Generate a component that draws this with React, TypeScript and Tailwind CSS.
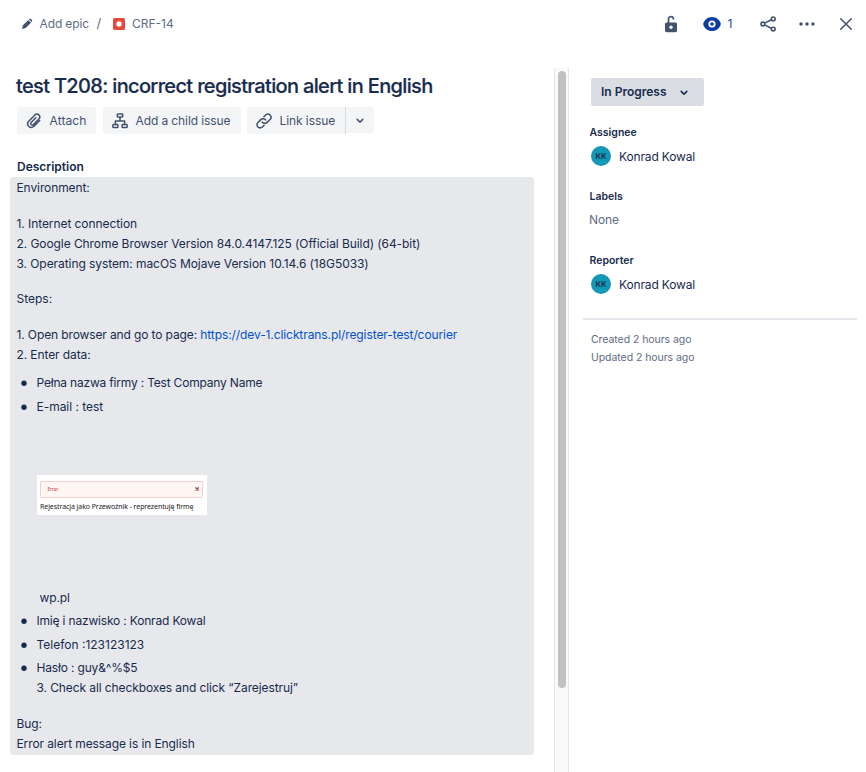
import type { ReactNode } from "react";

function Chevron({ className }: { className: string }) {
  return (
    <svg viewBox="0 0 8 6" className={className} fill="none" stroke="currentColor" strokeWidth="1.6" strokeLinecap="round" strokeLinejoin="round">
      <path d="M1.2 1.4 4 4.2 6.8 1.4" />
    </svg>
  );
}

function Header() {
  return (
    <header className="flex h-12 items-center pl-[21px] pr-[13px] text-[12px] text-[#5e6c84]">
      <svg viewBox="0 0 12 12" className="h-3 w-3 text-[#42526e]" fill="currentColor">
        <path d="M7.3 1.9 10.1 4.7 4.6 9.9 1 11 2 7.200Z M8 1.3 8.600.800Q9.300.2 10 .9L11 1.900Q11.600 2.600 11 3.300L10.500 4Z" />
      </svg>
      <span className="ml-[6.500px] w-[50px] whitespace-nowrap tracking-[-0.12px]">Add epic</span>
      <span className="ml-[7px] w-[6px] text-[13px]">/</span>
      <svg viewBox="0 0 12 12" className="ml-[10.500px] h-3 w-3">
        <rect width="12" height="12" rx="1.5" fill="#e5493a" />
        <circle cx="6" cy="6" r="2.7" fill="#fff" />
      </svg>
      <span className="ml-[7px]">CRF-14</span>
      <div className="ml-auto flex items-center text-[#42526e]">
        <svg viewBox="0 0 14 18" className="h-[18px] w-[14px]" fill="none">
          <rect x="1" y="7.5" width="12" height="9.7" rx="1.6" fill="currentColor" />
          <path d="M4.500 8V4.200a2.500 2.500 0 0 1 4.900-.7v1" stroke="currentColor" strokeWidth="1.7" />
          <circle cx="7" cy="12.2" r="1.7" fill="#fff" />
        </svg>
        <svg viewBox="0 0 18 14" className="ml-[25px] h-[14px] w-[18px]">
          <path d="M9 0C4.5 0 1.5 3 .4 6.1Q.1 7 .4 7.9C1.5 11 4.5 14 9 14s7.500-3 8.600-6.100Q17.900 7 17.600 6.100C16.500 3 13.500 0 9 0Z" fill="#0a3f9f" />
          <circle cx="9" cy="7" r="2.7" fill="none" stroke="#fff" strokeWidth="1.8" />
        </svg>
        <span className="ml-[6.500px] w-[8px] text-[#0747a6]">1</span>
        <svg viewBox="0 0 16 16" className="ml-[24.500px] h-4 w-4" fill="none" stroke="currentColor" strokeWidth="1.6">
          <circle cx="2.900" cy="8" r="1.900" />
          <circle cx="13.200" cy="2.900" r="1.900" />
          <circle cx="13.200" cy="13.100" r="1.900" />
          <path d="M4.700 7.100 11.400 3.800M4.700 8.900 11.400 12.200" />
        </svg>
        <svg viewBox="0 0 16 4" className="-mt-px ml-[23px] h-1 w-4" fill="currentColor">
          <circle cx="2" cy="2" r="1.750" />
          <circle cx="8" cy="2" r="1.750" />
          <circle cx="14" cy="2" r="1.750" />
        </svg>
        <svg viewBox="0 0 14 14" className="-mt-px ml-[24px] h-[14px] w-[14px]" fill="none" stroke="currentColor" strokeWidth="1.500" strokeLinecap="round">
          <path d="M1.700 1.700 12.300 12.300M12.300 1.700 1.700 12.300" />
        </svg>
      </div>
    </header>
  );
}

function Toolbar() {
  return (
    <div className="ml-[17px] mt-[7px] flex h-[27px] text-[12px] text-[#42526e]">
      <button className="flex w-[79px] items-center rounded-[3px] bg-[#f4f5f7] pl-[9px]">
        <svg viewBox="0 0 24 24" className="h-4 w-4" fill="none" stroke="currentColor" strokeWidth="2.300" strokeLinecap="round" strokeLinejoin="round">
          <path d="M20.500 11.300 11.700 20a5.300 5.300 0 0 1-7.900-.3 5.500 5.500 0 0 1 .3-7.400l9.300-9.400a4.100 4.100 0 0 1 6.100.2 4.200 4.200 0 0 1-.2 5.800l-8.500 8.600a2.200 2.200 0 0 1-3.200-.1 2.300 2.300 0 0 1 .1-3.100l7-7.100" />
        </svg>
        <span className="ml-[7.500px] whitespace-nowrap tracking-[0.1px]">Attach</span>
      </button>
      <button className="ml-[7px] flex w-[138px] items-center rounded-[3px] bg-[#f4f5f7] pl-[9px]">
        <svg viewBox="0 0 16 16" className="h-4 w-4" fill="none" stroke="currentColor" strokeWidth="1.500" strokeLinejoin="round">
          <rect x="5.300" y="1" width="5.400" height="3" rx=".7" />
          <rect x=".9" y="11.600" width="5" height="3" rx=".7" />
          <rect x="10.100" y="11.600" width="5" height="3" rx=".7" />
          <path d="M8 4V7.800M3.400 11.500V7.900H12.600V11.500" />
        </svg>
        <span className="ml-[7.500px] whitespace-nowrap tracking-[-0.1px]">Add a child issue</span>
      </button>
      <button className="ml-[6px] flex w-[98px] items-center rounded-l-[3px] bg-[#f4f5f7] pl-[9px]">
        <svg viewBox="0 0 24 24" className="h-4 w-4" fill="none" stroke="currentColor" strokeWidth="2.300" strokeLinecap="round" strokeLinejoin="round">
          <path d="M9.300 13.500a5 5 0 0 0 7.500.6l4.300-4.300a4.700 4.700 0 0 0-6.700-6.700L11.800 5.700" />
          <path d="M14.700 10.500a5 5 0 0 0-7.500-.6l-4.300 4.300a4.700 4.700 0 0 0 6.700 6.700l2.600-2.600" />
        </svg>
        <span className="ml-[7.500px] whitespace-nowrap tracking-[-0.08px]">Link issue</span>
      </button>
      <div className="w-px bg-[#d5d8de]" />
      <button className="flex h-[26px] w-[28px] items-center justify-center rounded-r-[3px] bg-[#f4f5f7]">
        <Chevron className="mt-px h-[6px] w-[8px]" />
      </button>
    </div>
  );
}

function Item({ children, className }: { children: ReactNode; className: string }) {
  return (
    <li className={"flex items-start " + className}>
      <svg viewBox="0 0 6 6" className="ml-[4.500px] mr-[9.500px] mt-[7px] h-[6px] w-[6px] shrink-0">
        <circle cx="3" cy="3.200" r="2.700" fill="#172b4d" />
      </svg>
      <div>{children}</div>
    </li>
  );
}

function Description() {
  return (
    <div className="ml-[10px] mt-[1px] h-[578px] w-[524px] whitespace-nowrap rounded-[3px] bg-[#e7e8ec] pl-[6.500px] pt-px text-[12px] leading-5 tracking-[-0.1px] text-[#172b4d]">
      <p>Environment:</p>
      <p className="mt-4 tracking-[-0.07px]">1. Internet connection</p>
      <p className="tracking-[-0.075px]">2. Google Chrome Browser Version 84.0.4147.125 (Official Build) (64-bit)</p>
      <p className="tracking-[-0.07px]">3. Operating system: macOS Mojave Version 10.14.6 (18G5033)</p>
      <p className="mt-[15px] tracking-normal">Steps:</p>
      <p className="mt-4 tracking-[-0.12px]">
        1. Open browser and go to page: <a className="tracking-[-0.09px] text-[#0052cc]">https://dev-1.clicktrans.pl/register-test/courier</a>
      </p>
      <p>2. Enter data:</p>
      <ul>
        <Item className="mt-2 tracking-[-0.19px]">Pełna nazwa firmy : Test Company Name</Item>
        <Item className="mt-1">
          <p className="tracking-[-0.03px]">E-mail : test</p>
          <div className="mt-[58px] h-10 w-[170px] bg-white pl-[3px] pt-[6px]">
            <div className="flex h-[17px] w-[163px] items-center justify-between rounded-[1px] border border-[#f3cfd0] bg-[#fff5f3] pl-[7px] pr-[3px] font-['Noto_Sans',sans-serif] text-[4.500px] font-medium leading-none tracking-normal text-[#b94a48]">
              <span>Error</span>
              <svg viewBox="0 0 4 4" className="mb-[2px] h-1 w-1" fill="none" stroke="#a8484c" strokeWidth="1.300">
                <path d="M.4.4 3.600 3.600M3.600.4.4 3.600" />
              </svg>
            </div>
            <p className="ml-[0.500px] mt-[3px] font-['Noto_Sans',sans-serif] text-[7px] leading-[11px] tracking-[-0.080px] text-[#222]">Rejestracja jako Przewoźnik - reprezentuję firmę</p>
          </div>
          <p className="ml-[3px] mt-[73px]">wp.pl</p>
        </Item>
        <Item className="mt-[3px] tracking-[-0.18px]">Imię i nazwisko : Konrad Kowal</Item>
        <Item className="mt-1 tracking-normal">Telefon :123123123</Item>
        <Item className="mt-[3px]">
          <p className="tracking-[-0.17px]">Hasło : guy&amp;^%$5</p>
          <p className="tracking-[-0.1px]">3. Check all checkboxes and click “Zarejestruj”</p>
        </Item>
      </ul>
      <p className="mt-4">Bug:</p>
      <p>Error alert message is in English</p>
    </div>
  );
}

function Person({ label, className }: { label: string; className: string }) {
  return (
    <section className={className}>
      <h3 className="h-4 text-[10.500px] font-semibold leading-4">{label}</h3>
      <div className="ml-[1.500px] mt-[5px] flex h-5 items-center">
        <span className="flex h-5 w-5 items-center justify-center rounded-full bg-[#1398b5] text-[8px] font-semibold text-[#172b4d]">KK</span>
        <span className="ml-[8px] mt-[2px] text-[12px] tracking-[-0.15px]">Konrad Kowal</span>
      </div>
    </section>
  );
}

function Sidebar() {
  return (
    <aside className="flex-1 pl-[14px] pt-[10px] text-[#172b4d]">
      <button className="ml-[8px] flex h-7 w-[113px] items-center rounded-[2px] bg-[#dadde2] pl-[10px] text-[12px] font-semibold">
        <span className="whitespace-nowrap">In Progress</span>
        <Chevron className="ml-[13px] mt-px h-[6px] w-[8px]" />
      </button>
      <Person label="Assignee" className="ml-[6.500px] mt-[19px]" />
      <section className="ml-[6.500px] mt-[23px]">
        <h3 className="h-4 text-[10.500px] font-semibold leading-4">Labels</h3>
        <p className="-ml-[0.500px] mt-[5px] h-5 text-[12px] leading-5 tracking-[-0.1px] text-[#5e6c84]">None</p>
      </section>
      <Person label="Reporter" className="ml-[6.500px] mt-[23px]" />
      <hr className="mt-6 h-[2px] w-[274px] border-0 bg-[#e6e7ec]" />
      <div className="ml-[8px] mt-[11px] text-[10.500px] leading-[18px] tracking-[-0.06px] text-[#5e6c84]">
        <p>Created 2 hours ago</p>
        <p>Updated 2 hours ago</p>
      </div>
    </aside>
  );
}

export default function App() {
  return (
    <div className="h-[772px] w-[866px] overflow-hidden bg-white font-['Inter',sans-serif]">
      <Header />
      <div className="mt-5 flex h-[704px]">
        <main className="w-[554px]">
          <h1 className="ml-4 mt-[4px] h-7 whitespace-nowrap text-[20px] font-medium leading-7 tracking-[-0.66px] text-[#172b4d] [-webkit-text-stroke:0.2px_#172b4d]">
            test T208: incorrect registration alert in English
          </h1>
          <Toolbar />
          <h2 className="ml-[17px] mt-[24px] h-[18px] text-[12px] font-semibold leading-[18px] text-[#172b4d]">Description</h2>
          <Description />
        </main>
        <div className="w-[15px] border-x border-[#e5e5e5] bg-[#fafafa] pl-[3px] pt-[3px]">
          <div className="h-[617px] w-2 rounded-full bg-[#c1c1c1]" />
        </div>
        <Sidebar />
      </div>
    </div>
  );
}
